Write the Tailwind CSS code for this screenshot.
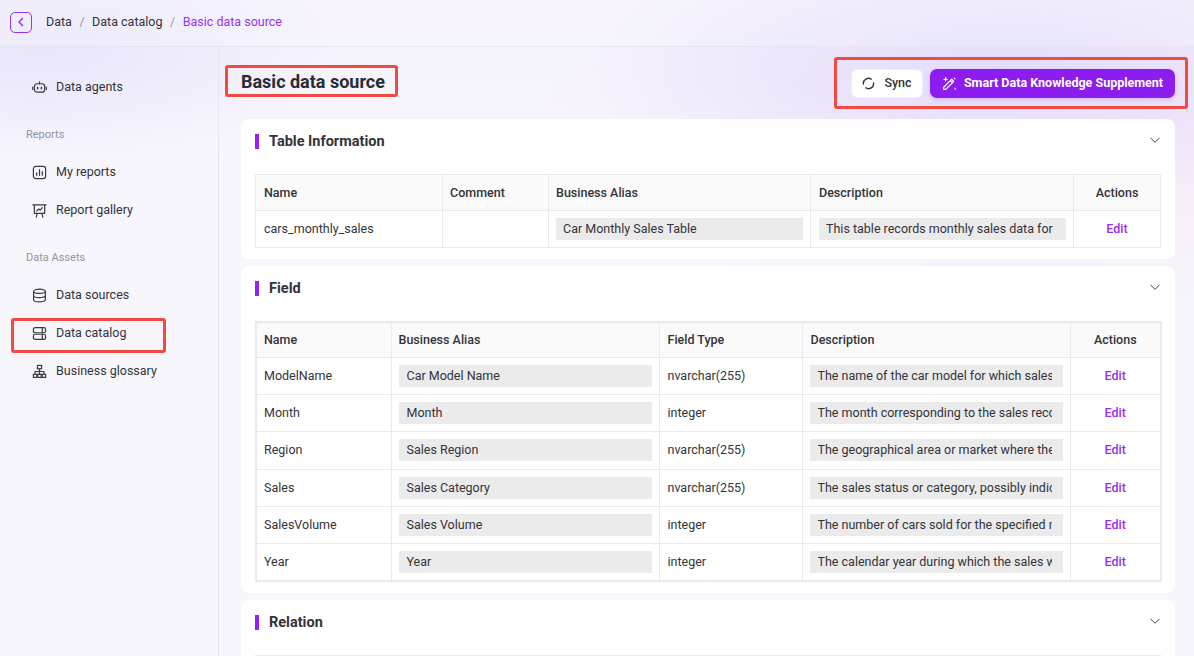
<!DOCTYPE html>
<html lang="en">
<head>
  <meta charset="UTF-8">
  <meta name="viewport" content="width=device-width, initial-scale=1.0">
  <title>Basic data source</title>
  <script src="https://cdn.jsdelivr.net/npm/@tailwindcss/browser@4"></script>
</head>
<body class="h-[656px] overflow-hidden font-['Roboto',sans-serif] text-[12.5px] text-[#33333b] bg-[#f7f6fc]">
  <div class="h-full flex flex-col bg-[radial-gradient(ellipse_420px_130px_at_1000px_70px,#e3dcfb_0%,#efe9fc00_100%),radial-gradient(ellipse_300px_110px_at_40px_50px,#e9e5fb_0%,#efecfb00_100%),radial-gradient(ellipse_620px_190px_at_1150px_130px,#f7e8f8_0%,#f8eef900_100%),linear-gradient(180deg,#f5f2fd_0px,#f7f6fc_160px)]">
    <!-- Top bar -->
    <header class="h-[47px] shrink-0 flex items-center border-b border-[#e6e4f0] pl-[10px] pb-[2px] bg-white/20">
      <button class="w-[22px] h-[21px] flex items-center justify-center border border-[#9333f5] rounded-[5px] text-[#9333f5]">
        <svg width="12" height="12" viewBox="0 0 12 12" fill="none" stroke="currentColor" stroke-width="1.5" stroke-linecap="round" stroke-linejoin="round"><path d="M7.5 2.5 4 6l3.5 3.5"/></svg>
      </button>
      <nav class="flex items-center ml-[14px]">
        <span>Data</span>
        <span class="mx-[7.5px] text-[#9a9aa2]">/</span>
        <span>Data catalog</span>
        <span class="mx-[7.5px] text-[#9a9aa2]">/</span>
        <span class="text-[#9333f5]">Basic data source</span>
      </nav>
    </header>

    <div class="flex-1 flex min-h-0">
      <!-- Sidebar -->
      <aside class="w-[219px] shrink-0 border-r border-[#e6e4f0] pl-[11px] pt-[21px]">
        <a class="h-[38px] w-[155px] flex items-center pl-[21px] gap-[9px]">
          <svg class="w-[15px] h-[15px]" viewBox="0 0 16 16" fill="none" stroke="#3a3a42" stroke-width="1.3" stroke-linecap="round"><rect x="2.5" y="4" width="11" height="9" rx="3"/><path d="M8 4V2M.8 7.5v2.5M15.2 7.5v2.5"/><path d="M6 8v1.2M10 8v1.2" stroke-width="1.6"/></svg>
          <span>Data agents</span>
        </a>
        <div class="mt-[22px] mb-[11px] pl-[15px] text-[11px] leading-[14px] text-[#94949c]">Reports</div>
        <a class="h-[38px] w-[155px] flex items-center pl-[21px] gap-[9px]">
          <svg class="w-[15px] h-[15px]" viewBox="0 0 16 16" fill="none" stroke="#3a3a42" stroke-width="1.3" stroke-linecap="round"><rect x="1.5" y="1.5" width="13" height="13" rx="2.5"/><path d="M5 8.5V11M8 5v6M11 7v4"/></svg>
          <span>My reports</span>
        </a>
        <a class="h-[38px] w-[155px] flex items-center pl-[21px] gap-[9px]">
          <svg class="w-[15px] h-[15px]" viewBox="0 0 16 16" fill="none" stroke="#3a3a42" stroke-width="1.3" stroke-linecap="round" stroke-linejoin="round"><path d="M1 2h14M2.500 2v9h11V2M5.500 11l-1 4M10.500 11l1 4M5 8.500l2.200-2.200 1.600 1.400L11 5"/></svg>
          <span>Report gallery</span>
        </a>
        <div class="mt-[22px] mb-[11px] pl-[15px] text-[11px] leading-[14px] text-[#94949c]">Data Assets</div>
        <a class="h-[38px] w-[155px] flex items-center pl-[21px] gap-[9px]">
          <svg class="w-[15px] h-[15px]" viewBox="0 0 16 16" fill="none" stroke="#3a3a42" stroke-width="1.3"><ellipse cx="8" cy="3.500" rx="6.300" ry="2.300"/><path d="M1.700 3.500v9c0 1.300 2.800 2.300 6.300 2.300s6.300-1 6.300-2.300v-9M1.700 8c0 1.300 2.800 2.300 6.300 2.300s6.300-1 6.300-2.300"/></svg>
          <span>Data sources</span>
        </a>
        <a class="h-[35px] w-[155px] mt-[4px] flex items-center pl-[18px] pb-[4px] gap-[9px] border-[3px] border-[#f04a41] rounded-[3px]">
          <svg class="w-[15px] h-[15px]" viewBox="0 0 16 16" fill="none" stroke="#3a3a42" stroke-width="1.3" stroke-linecap="round"><rect x="1.500" y="1.800" width="13" height="5.400" rx="1.800"/><rect x="1.500" y="8.800" width="13" height="5.400" rx="1.800"/><path d="M11 1.800v5.400M11 8.800v5.400"/></svg>
          <span>Data catalog</span>
        </a>
        <a class="h-[38px] w-[155px] -mt-[1px] flex items-center pl-[21px] gap-[9px]">
          <svg class="w-[15px] h-[15px]" viewBox="0 0 16 16" fill="none" stroke="#3a3a42" stroke-width="1.3"><rect x="5.800" y="1.500" width="4.400" height="3.600"/><rect x="1.500" y="11" width="3.600" height="3.300"/><rect x="6.200" y="11" width="3.600" height="3.300"/><rect x="10.900" y="11" width="3.600" height="3.300"/><path d="M8 5.100V11M3.300 11V8h9.400v3"/></svg>
          <span>Business glossary</span>
        </a>
      </aside>

      <!-- Main content -->
      <main class="flex-1 min-w-0 pl-[22px] pr-[19px] overflow-hidden">
        <div class="h-[72px] flex items-start justify-between">
          <h1 class="mt-[18px] -ml-[16px] h-[32px] pl-[13px] pr-[10px] pt-[1px] flex items-center border-[3px] border-[#f04a41] rounded-[3px] text-[18px] font-bold text-[#2b2b33]">Basic data source</h1>
          <div class="mt-[10px] -mr-[13px] h-[52px] pl-[14px] pr-[10px] flex items-center gap-[7px] border-[3px] border-[#f04a41] rounded-[3px]">
            <button class="h-[29px] w-[72px] flex items-center justify-center gap-[9px] bg-white border border-[#efedf6] rounded-[6px] font-medium">
              <svg class="w-[13px] h-[13px]" viewBox="0 0 14 14" fill="none" stroke="#33333b" stroke-width="1.500" stroke-linecap="round"><path d="M1.500 7.500A5.500 5.500 0 0 1 10 2.400"/><path d="M12.500 6.500A5.500 5.500 0 0 1 4 11.600"/></svg>
              Sync
            </button>
            <button class="h-[29px] w-[245px] flex items-center justify-center gap-[7px] bg-[#8c1cf0] rounded-[7px] text-white font-bold shadow-[0_2px_5px_#8c1cf033]">
              <svg class="w-[15px] h-[15px]" viewBox="0 0 16 16" fill="none" stroke="#fff" stroke-width="1.300" stroke-linecap="round" stroke-linejoin="round"><path d="M1.800 14.200V12l8.500-8.500 2.200 2.200L4 14.200H1.800zM9 5l2.200 2.200M3.800 1.800v3.400M2.100 3.500h3.400M14 13.200v.8"/><path d="M13 2.200l.8.800"/></svg>
              Smart Data Knowledge Supplement
            </button>
          </div>
        </div>

        <!-- Table Information -->
        <section class="h-[140px] bg-white rounded-[8px] px-[14px]">
          <div class="h-[55px] flex items-center justify-between pb-[12px] pt-[2px]">
            <h2 class="flex items-center gap-[10px] text-[14.5px] font-bold text-[#33333b]"><i class="w-[4px] h-[15px] bg-[#9a1ff5]"></i>Table Information</h2>
            <svg class="w-[12px] h-[12px] mb-[4px]" viewBox="0 0 12 12" fill="none" stroke="#44444c" stroke-width="1"><path d="M1.500 3.800 6 8.300l4.500-4.500"/></svg>
          </div>
          <table class="w-[905px] table-fixed border-collapse">
            <colgroup><col class="w-[187px]"><col class="w-[106px]"><col class="w-[262px]"><col class="w-[263px]"><col class="w-[87px]"></colgroup>
            <thead>
              <tr class="h-[36px] bg-[#fafafa]">
                <th class="border border-[#e9e9ef] px-[8px] pt-[2px] text-left font-medium">Name</th>
                <th class="border border-[#e9e9ef] px-[7px] pt-[2px] text-left font-medium">Comment</th>
                <th class="border border-[#e9e9ef] px-[7px] pt-[2px] text-left font-medium">Business Alias</th>
                <th class="border border-[#e9e9ef] px-[8px] pt-[2px] text-left font-medium">Description</th>
                <th class="border border-[#e9e9ef] px-[8px] pt-[2px] text-center font-medium">Actions</th>
              </tr>
            </thead>
            <tbody>
              <tr class="h-[37px]">
                <td class="border border-[#e9e9ef] px-[8px]">cars_monthly_sales</td>
                <td class="border border-[#e9e9ef] px-[7px]"></td>
                <td class="border border-[#e9e9ef] px-[7px]"><div class="h-[22px] leading-[22px] bg-[#ebebeb] pl-[7px] pr-[11px] overflow-hidden whitespace-nowrap">Car Monthly Sales Table</div></td>
                <td class="border border-[#e9e9ef] pl-[8px] pr-[7px]"><div class="h-[22px] leading-[22px] bg-[#ebebeb] pl-[7px] pr-[11px]"><div class="overflow-hidden whitespace-nowrap">This table records monthly sales data for each</div></div></td>
                <td class="border border-[#e9e9ef] px-[8px] text-center font-medium text-[#9a2cf5]">Edit</td>
              </tr>
            </tbody>
          </table>
        </section>

        <!-- Field -->
        <section class="h-[327px] mt-[7px] bg-white rounded-[8px] px-[14px]">
          <div class="h-[55px] flex items-center justify-between pb-[12px] pt-[2px]">
            <h2 class="flex items-center gap-[10px] text-[14.5px] font-bold text-[#33333b]"><i class="w-[4px] h-[15px] bg-[#9a1ff5]"></i>Field</h2>
            <svg class="w-[12px] h-[12px] mb-[4px]" viewBox="0 0 12 12" fill="none" stroke="#44444c" stroke-width="1"><path d="M1.500 3.800 6 8.300l4.500-4.500"/></svg>
          </div>
          <table class="w-[905px] table-fixed border-collapse border-2 border-[#e9e9ef]">
            <colgroup><col class="w-[135px]"><col class="w-[268px]"><col class="w-[143px]"><col class="w-[268px]"><col class="w-[91px]"></colgroup>
            <thead>
              <tr class="h-[35px] bg-[#fafafa]">
                <th class="border border-[#e9e9ef] px-[7px] pt-[2px] text-left font-medium">Name</th>
                <th class="border border-[#e9e9ef] px-[7px] pt-[2px] text-left font-medium">Business Alias</th>
                <th class="border border-[#e9e9ef] px-[8px] pt-[2px] text-left font-medium">Field Type</th>
                <th class="border border-[#e9e9ef] px-[8px] pt-[2px] text-left font-medium">Description</th>
                <th class="border border-[#e9e9ef] px-[8px] pt-[2px] text-center font-medium">Actions</th>
              </tr>
            </thead>
            <tbody>
              <tr class="h-[37px]">
                <td class="border border-[#e9e9ef] px-[7px] pt-[2px]">ModelName</td>
                <td class="border border-[#e9e9ef] px-[7px]"><div class="h-[22px] leading-[22px] bg-[#ebebeb] px-[8px] overflow-hidden whitespace-nowrap">Car Model Name</div></td>
                <td class="border border-[#e9e9ef] px-[8px] pt-[2px]">nvarchar(255)</td>
                <td class="border border-[#e9e9ef] px-[7px]"><div class="h-[22px] leading-[22px] bg-[#ebebeb] pl-[8px] pr-[11px]"><div class="overflow-hidden whitespace-nowrap">The name of the car model for which sales data</div></div></td>
                <td class="border border-[#e9e9ef] px-[8px] pt-[2px] text-center font-medium text-[#9a2cf5]">Edit</td>
              </tr>
              <tr class="h-[37px]">
                <td class="border border-[#e9e9ef] px-[7px] pt-[2px]">Month</td>
                <td class="border border-[#e9e9ef] px-[7px]"><div class="h-[22px] leading-[22px] bg-[#ebebeb] px-[8px] overflow-hidden whitespace-nowrap">Month</div></td>
                <td class="border border-[#e9e9ef] px-[8px] pt-[2px]">integer</td>
                <td class="border border-[#e9e9ef] px-[7px]"><div class="h-[22px] leading-[22px] bg-[#ebebeb] pl-[8px] pr-[11px]"><div class="overflow-hidden whitespace-nowrap">The month corresponding to the sales record</div></div></td>
                <td class="border border-[#e9e9ef] px-[8px] pt-[2px] text-center font-medium text-[#9a2cf5]">Edit</td>
              </tr>
              <tr class="h-[38px]">
                <td class="border border-[#e9e9ef] px-[7px]">Region</td>
                <td class="border border-[#e9e9ef] px-[7px]"><div class="h-[22px] leading-[22px] bg-[#ebebeb] px-[8px] overflow-hidden whitespace-nowrap">Sales Region</div></td>
                <td class="border border-[#e9e9ef] px-[8px]">nvarchar(255)</td>
                <td class="border border-[#e9e9ef] px-[7px]"><div class="h-[22px] leading-[22px] bg-[#ebebeb] pl-[8px] pr-[11px]"><div class="overflow-hidden whitespace-nowrap">The geographical area or market where the sales</div></div></td>
                <td class="border border-[#e9e9ef] px-[8px] text-center font-medium text-[#9a2cf5]">Edit</td>
              </tr>
              <tr class="h-[37px]">
                <td class="border border-[#e9e9ef] px-[7px] pt-[2px]">Sales</td>
                <td class="border border-[#e9e9ef] px-[7px]"><div class="h-[22px] leading-[22px] bg-[#ebebeb] px-[8px] overflow-hidden whitespace-nowrap">Sales Category</div></td>
                <td class="border border-[#e9e9ef] px-[8px] pt-[2px]">nvarchar(255)</td>
                <td class="border border-[#e9e9ef] px-[7px]"><div class="h-[22px] leading-[22px] bg-[#ebebeb] pl-[8px] pr-[11px]"><div class="overflow-hidden whitespace-nowrap">The sales status or category, possibly indicating</div></div></td>
                <td class="border border-[#e9e9ef] px-[8px] pt-[2px] text-center font-medium text-[#9a2cf5]">Edit</td>
              </tr>
              <tr class="h-[37px]">
                <td class="border border-[#e9e9ef] px-[7px] pt-[2px]">SalesVolume</td>
                <td class="border border-[#e9e9ef] px-[7px]"><div class="h-[22px] leading-[22px] bg-[#ebebeb] px-[8px] overflow-hidden whitespace-nowrap">Sales Volume</div></td>
                <td class="border border-[#e9e9ef] px-[8px] pt-[2px]">integer</td>
                <td class="border border-[#e9e9ef] px-[7px]"><div class="h-[22px] leading-[22px] bg-[#ebebeb] pl-[8px] pr-[11px]"><div class="overflow-hidden whitespace-nowrap">The number of cars sold for the specified model</div></div></td>
                <td class="border border-[#e9e9ef] px-[8px] pt-[2px] text-center font-medium text-[#9a2cf5]">Edit</td>
              </tr>
              <tr class="h-[38px]">
                <td class="border border-[#e9e9ef] px-[7px] pt-[2px]">Year</td>
                <td class="border border-[#e9e9ef] px-[7px]"><div class="h-[22px] leading-[22px] bg-[#ebebeb] px-[8px] overflow-hidden whitespace-nowrap">Year</div></td>
                <td class="border border-[#e9e9ef] px-[8px] pt-[2px]">integer</td>
                <td class="border border-[#e9e9ef] px-[7px]"><div class="h-[22px] leading-[22px] bg-[#ebebeb] pl-[8px] pr-[11px]"><div class="overflow-hidden whitespace-nowrap">The calendar year during which the sales were</div></div></td>
                <td class="border border-[#e9e9ef] px-[8px] pt-[2px] text-center font-medium text-[#9a2cf5]">Edit</td>
              </tr>
            </tbody>
          </table>
        </section>

        <!-- Relation -->
        <section class="h-[120px] mt-[7px] bg-white rounded-[8px] px-[14px]">
          <div class="h-[55px] flex items-center justify-between pb-[12px] pt-[2px]">
            <h2 class="flex items-center gap-[10px] text-[14.5px] font-bold text-[#33333b]"><i class="w-[4px] h-[15px] bg-[#9a1ff5]"></i>Relation</h2>
            <svg class="w-[12px] h-[12px] mb-[4px]" viewBox="0 0 12 12" fill="none" stroke="#44444c" stroke-width="1"><path d="M1.500 3.800 6 8.300l4.500-4.500"/></svg>
          </div>
          <div class="h-px bg-[#e9e9ef]"></div>
        </section>
      </main>
    </div>
  </div>
</body>
</html>
